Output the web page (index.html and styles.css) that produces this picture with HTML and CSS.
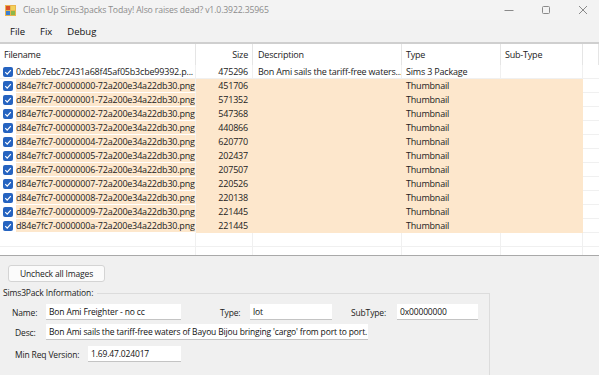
FILE: index.html
```html
<!DOCTYPE html>
<html lang="en">
<head>
    <meta charset="UTF-8">
    <title>Clean Up Sims3packs Today!</title>
    <link rel="stylesheet" href="styles.css">
</head>
<body>
<div class="window">
    <div class="titlebar">
        <svg class="app-icon" width="11" height="11" viewBox="0 0 11 11">
            <rect x="0" y="0" width="11" height="11" fill="#e9b44c"/>
            <rect x="1" y="1" width="4" height="4" fill="#d9502b"/>
            <rect x="6" y="1" width="4" height="4" fill="#f2d05a"/>
            <rect x="1" y="6" width="4" height="4" fill="#3d7fd0"/>
            <rect x="6" y="6" width="4" height="4" fill="#8cb84a"/>
        </svg>
        <span class="title">Clean Up Sims3packs Today! Also raises dead? v1.0.3922.35965</span>
        <div class="controls">
            <svg width="10" height="10" viewBox="0 0 10 10"><path d="M0.5 5.5h9" stroke="#8a8a8a" stroke-width="1"/></svg>
            <svg width="10" height="10" viewBox="0 0 10 10"><rect x="1.5" y="1.5" width="7" height="7" rx="1" fill="none" stroke="#8a8a8a" stroke-width="1"/></svg>
            <svg width="10" height="10" viewBox="0 0 10 10"><path d="M1 1l8 8M9 1l-8 8" stroke="#8a8a8a" stroke-width="1"/></svg>
        </div>
    </div>
    <div class="menubar">
        <span>File</span>
        <span>Fix</span>
        <span>Debug</span>
    </div>

    <div class="listview">
        <div class="row header">
            <div class="cell c-name">Filename</div>
            <div class="cell c-size">Size</div>
            <div class="cell c-desc">Description</div>
            <div class="cell c-type">Type</div>
            <div class="cell c-sub">Sub-Type</div>
            <div class="cell c-end"></div>
        </div>
        <div id="rows"></div>
        <div class="row empty">
            <div class="cell c-name"></div><div class="cell c-size"></div><div class="cell c-desc"></div>
            <div class="cell c-type"></div><div class="cell c-sub"></div><div class="cell c-end"></div>
        </div>
        <div class="row empty">
            <div class="cell c-name"></div><div class="cell c-size"></div><div class="cell c-desc"></div>
            <div class="cell c-type"></div><div class="cell c-sub"></div><div class="cell c-end"></div>
        </div>
    </div>

    <div class="panel">
        <button class="btn">Uncheck all Images</button>
        <div class="group">
            <div class="group-title">Sims3Pack Information:</div>
            <div class="line first">
                <label class="lbl name-lbl">Name:</label>
                <div class="box name-box">Bon Ami Freighter - no cc</div>
                <label class="lbl type-lbl">Type:</label>
                <div class="box type-box">lot</div>
                <label class="lbl sub-lbl">SubType:</label>
                <div class="box sub-box">0x00000000</div>
            </div>
            <div class="line">
                <label class="lbl desc-lbl">Desc:</label>
                <div class="box desc-box">Bon Ami sails the tariff-free waters of Bayou Bijou bringing 'cargo' from port to port. Stop by and see</div>
            </div>
            <div class="line last">
                <label class="lbl ver-lbl">Min Req Version:</label>
                <div class="box ver-box">1.69.47.024017</div>
            </div>
        </div>
    </div>
</div>

<script>
    var files = [
        ["0xdeb7ebc72431a68f45af05b3cbe99392.p...", "475296", "Bon Ami sails the tariff-free waters...", "Sims 3 Package", false],
        ["d84e7fc7-00000000-72a200e34a22db30.png", "451706", "", "Thumbnail", true],
        ["d84e7fc7-00000001-72a200e34a22db30.png", "571352", "", "Thumbnail", true],
        ["d84e7fc7-00000002-72a200e34a22db30.png", "547368", "", "Thumbnail", true],
        ["d84e7fc7-00000003-72a200e34a22db30.png", "440866", "", "Thumbnail", true],
        ["d84e7fc7-00000004-72a200e34a22db30.png", "620770", "", "Thumbnail", true],
        ["d84e7fc7-00000005-72a200e34a22db30.png", "202437", "", "Thumbnail", true],
        ["d84e7fc7-00000006-72a200e34a22db30.png", "207507", "", "Thumbnail", true],
        ["d84e7fc7-00000007-72a200e34a22db30.png", "220526", "", "Thumbnail", true],
        ["d84e7fc7-00000008-72a200e34a22db30.png", "220138", "", "Thumbnail", true],
        ["d84e7fc7-00000009-72a200e34a22db30.png", "221445", "", "Thumbnail", true],
        ["d84e7fc7-0000000a-72a200e34a22db30.png", "221445", "", "Thumbnail", true]
    ];

    var check = '<svg class="check" width="10" height="10" viewBox="0 0 10 10">' +
        '<rect width="10" height="10" rx="2" fill="#2563c0"/>' +
        '<path d="M2.3 5.2l1.9 1.9 3.6-4" fill="none" stroke="#fff" stroke-width="1.2"/></svg>';

    var rows = document.getElementById("rows");
    files.forEach(function(f) {
        var row = document.createElement("div");
        row.className = "row" + (f[4] ? " image" : "");
        row.innerHTML =
            '<div class="cell c-name">' + check + '<span class="fname">' + f[0] + '</span></div>' +
            '<div class="cell c-size">' + f[1] + '</div>' +
            '<div class="cell c-desc">' + f[2] + '</div>' +
            '<div class="cell c-type">' + f[3] + '</div>' +
            '<div class="cell c-sub"></div>' +
            '<div class="cell c-end"></div>';
        rows.appendChild(row);
    });
</script>
</body>
</html>
```

FILE: styles.css
```css
body {
    margin: 0;
    font-family: "Open Sans", "Noto Sans", sans-serif;
    font-size: 8.5px;
    letter-spacing: -0.15px;
    color: #1b1b1b;
    background: #f0f0f0;
}

.window {
    width: 599px;
    height: 375px;
    overflow: hidden;
    display: flex;
    flex-direction: column;
    background: #f0f0f0;
}

.titlebar {
    flex: none;
    height: 20px;
    display: flex;
    align-items: center;
    background: #f3f3f3;
    padding-left: 5px;
}

.app-icon {
    margin-right: 7px;
}

.title {
    color: #8c8c8c;
    font-size: 8.7px;
    flex: 1;
}

.controls {
    display: flex;
    gap: 27px;
    padding-right: 11px;
}

.menubar {
    flex: none;
    height: 22px;
    display: flex;
    align-items: center;
    gap: 15px;
    padding-left: 10px;
    background: #f2f2f2;
    border-bottom: 2px solid #cfcfcf;
}

.menubar span {
    font-size: 9.5px;
    letter-spacing: 0;
    color: #111;
}

/* list view */
.listview {
    flex: none;
    height: 211px;
    background: #fff;
    border-bottom: 1px solid #a9a9a9;
    overflow: hidden;
    font-size: 9px;
    letter-spacing: -0.2px;
    color: #222;
}

.row {
    display: flex;
    height: 14px;
}

.row.header {
    height: 21px;
}

.cell {
    flex: none;
    box-sizing: border-box;
    border-right: 1px solid #f0f0f0;
    border-bottom: 1px solid #f0f0f0;
    white-space: nowrap;
    overflow: hidden;
    line-height: 13px;
    padding-left: 4px;
}

.header .cell {
    line-height: 21px;
    border-right: 1px solid #e5e5e5;
    border-bottom: none;
}

.c-name { width: 196px; display: flex; align-items: center; padding-left: 3px; }
.c-size { width: 57px; text-align: right; padding-right: 4px; }
.c-desc { width: 149px; padding-left: 5px; }
.c-type { width: 99px; }
.c-sub { width: 82px; }
.c-end { flex: 1; border-right: none; }

.header .c-name { padding-left: 4px; }

.check {
    flex: none;
    margin-right: 3px;
}

.fname {
    flex: 1;
    height: 14px;
    line-height: 13px;
}

.row.image .c-size,
.row.image .c-desc,
.row.image .c-type,
.row.image .c-sub,
.row.image .fname {
    background: #fde7cc;
    border-color: #fde7cc;
}

.row.image .c-name {
    border-bottom-color: #fff;
}

/* bottom panel */
.panel {
    flex: 1;
    padding: 9px 0 0 0;
}

.btn {
    display: block;
    margin-left: 8px;
    width: 97px;
    height: 17px;
    padding: 0;
    font-family: inherit;
    font-size: 8.5px;
    letter-spacing: -0.15px;
    color: #222;
    background: #fbfbfb;
    border: 1px solid #d4d4d4;
    border-radius: 3px;
}

.group {
    position: relative;
    margin-top: 11px;
    width: 486px;
    margin-left: 3px;
    height: 90px;
    border-top: 1px solid #dcdcdc;
    border-right: 1px solid #dcdcdc;
}

.group-title {
    position: absolute;
    top: -7px;
    left: 0;
    padding-right: 4px;
    background: #f0f0f0;
    line-height: 12px;
    color: #222;
}

.line {
    display: flex;
    align-items: center;
    height: 16px;
    margin-top: 4px;
}

.line.first {
    margin-top: 10px;
}

.line.last {
    margin-top: 6px;
}

.lbl {
    color: #222;
    flex: none;
    white-space: nowrap;
}

.box {
    flex: none;
    height: 16px;
    box-sizing: border-box;
    line-height: 15px;
    padding-left: 3px;
    background: #fff;
    border-bottom: 1px solid #c4c4c4;
    white-space: nowrap;
    overflow: hidden;
    color: #111;
}

.name-lbl { margin-left: 9px; width: 34px; }
.name-box { width: 135px; }
.type-lbl { margin-left: 39px; width: 30px; }
.type-box { width: 82px; }
.sub-lbl { margin-left: 19px; width: 46px; }
.sub-box { width: 81px; }
.desc-lbl { margin-left: 12px; width: 31px; }
.desc-box { width: 322px; }
.ver-lbl { margin-left: 12px; width: 73px; }
.ver-box { width: 93px; }
```
